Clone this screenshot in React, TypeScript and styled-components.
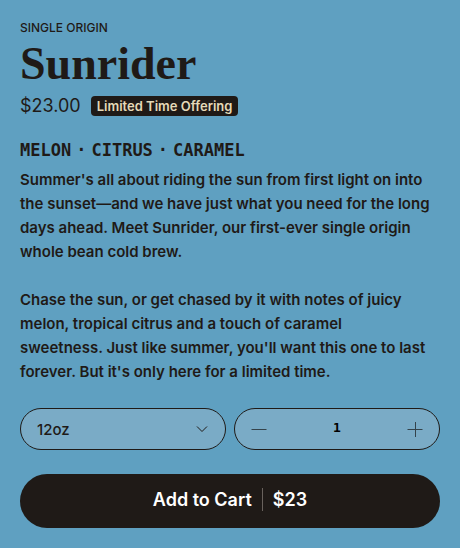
import React, { useState } from "react";
import styled, { createGlobalStyle } from "styled-components";

const ink = "#1f1a17";
const sans = `Inter, "Liberation Sans", sans-serif`;
const mono = `"DejaVu Sans Mono", monospace`;

const GlobalStyle = createGlobalStyle`
  *, *::before, *::after { box-sizing: border-box; }
  body {
    margin: 0;
    min-height: 100vh;
    background: #5fa0c1;
    color: ${ink};
    font-family: ${sans};
  }
  h1, p { margin: 0; }
`;

const Product = styled.main`
  padding: 20px;
`;

const Eyebrow = styled.p`
  font-size: 12px;
  font-weight: 500;
  line-height: 16px;
  text-transform: uppercase;
`;

const Title = styled.h1`
  margin-top: 4px;
  font-family: "Liberation Serif", serif;
  font-size: 46px;
  font-weight: 700;
  line-height: 48px;
`;

const PriceRow = styled.div`
  display: flex;
  align-items: center;
  gap: 10px;
  margin-top: 4px;
`;

const Price = styled.span`
  font-size: 18px;
  line-height: 28px;
`;

const Badge = styled.span`
  padding: 0 6px;
  border-radius: 4px;
  background: ${ink};
  color: #e5d9b8;
  font-size: 13px;
  font-weight: 600;
  line-height: 20px;
`;

const Notes = styled.p`
  display: flex;
  gap: 5px;
  margin-top: 20px;
  font-family: ${mono};
  font-size: 17px;
  font-weight: 700;
  line-height: 20px;
`;

const Description = styled.div`
  display: grid;
  gap: 24px;
  margin-top: 8px;
  font-size: 15px;
  font-weight: 600;
  line-height: 24px;
`;

const Paragraph = styled.p`
  white-space: pre-line;
`;

const Options = styled.div`
  display: grid;
  grid-template-columns: repeat(2, minmax(0, 1fr));
  gap: 8px;
  margin-top: 24px;
`;

const Pill = styled.div`
  display: flex;
  align-items: center;
  height: 42px;
  border: 1px solid ${ink};
  border-radius: 21px;
  background: #7aabc6;
`;

const SizePill = styled(Pill)`
  display: grid;
  > * { grid-area: 1 / 1; }
  > svg { justify-self: end; margin-right: 16px; pointer-events: none; }
`;

const SizeSelect = styled.select`
  width: 100%;
  height: 100%;
  padding: 0 40px 0 16px;
  border: 0;
  border-radius: 21px;
  appearance: none;
  background: transparent;
  color: ${ink};
  font: 500 15px ${sans};
`;

const StepButton = styled.button`
  display: flex;
  align-items: center;
  justify-content: center;
  flex: none;
  width: 48px;
  height: 100%;
  padding: 0;
  border: 0;
  background: transparent;
  color: #34434b;
`;

const Quantity = styled.input`
  flex: 1;
  min-width: 0;
  padding: 0 0 4px;
  border: 0;
  background: transparent;
  color: #000;
  font: 700 13px ${mono};
  text-align: center;
`;

const CartButton = styled.button`
  display: flex;
  align-items: center;
  justify-content: center;
  gap: 10px;
  width: 100%;
  height: 54px;
  margin-top: 24px;
  padding: 0 24px 4px;
  border: 0;
  border-radius: 27px;
  background: ${ink};
  color: #fff;
  font: 600 18px ${sans};
`;

const Divider = styled.span`
  width: 1px;
  height: 23px;
  background: #69625d;
`;

const paragraphs = [
  [
    "Summer's all about riding the sun from first light on into",
    "the sunset—and we have just what you need for the long",
    "days ahead. Meet Sunrider, our first-ever single origin",
    "whole bean cold brew.",
  ],
  [
    "Chase the sun, or get chased by it with notes of juicy",
    "melon, tropical citrus and a touch of caramel",
    "sweetness. Just like summer, you'll want this one to last",
    "forever. But it's only here for a limited time.",
  ],
];

export default function App() {
  const [quantity, setQuantity] = useState(1);

  return (
    <>
      <GlobalStyle />
      <Product>
        <Eyebrow>Single Origin</Eyebrow>
        <Title>Sunrider</Title>
        <PriceRow>
          <Price>$23.00</Price>
          <Badge>Limited Time Offering</Badge>
        </PriceRow>
        <Notes>
          <span>MELON</span> <span>·</span> <span>CITRUS</span> <span>·</span> <span>CARAMEL</span>
        </Notes>
        <Description>
          {paragraphs.map((lines) => (
            <Paragraph key={lines[0]}>{lines.join("\n")}</Paragraph>
          ))}
        </Description>
        <Options>
          <SizePill>
            <SizeSelect aria-label="Size" defaultValue="12oz">
              <option value="12oz">12oz</option>
            </SizeSelect>
            <svg width="14" height="10" viewBox="0 0 14 10" fill="none" stroke={ink} aria-hidden="true">
              <path d="M2 2.5 7 7.5 12 2.5" />
            </svg>
          </SizePill>
          <Pill>
            <StepButton
              type="button"
              aria-label="Decrease quantity"
              onClick={() => setQuantity(Math.max(1, quantity - 1))}
            >
              <svg width="16" height="16" viewBox="0 0 16 16" stroke="currentColor" aria-hidden="true">
                <path d="M.5 8.5h15" />
              </svg>
            </StepButton>
            <Quantity
              aria-label="Quantity"
              inputMode="numeric"
              value={quantity}
              onChange={(event) => setQuantity(Number(event.target.value) || 1)}
            />
            <StepButton type="button" aria-label="Increase quantity" onClick={() => setQuantity(quantity + 1)}>
              <svg width="16" height="16" viewBox="0 0 16 16" stroke="currentColor" aria-hidden="true">
                <path d="M.5 8.5h15M8.5 1v15" />
              </svg>
            </StepButton>
          </Pill>
        </Options>
        <CartButton type="button">
          <span>Add to Cart</span>
          <Divider />
          <span>$23</span>
        </CartButton>
      </Product>
    </>
  );
}
